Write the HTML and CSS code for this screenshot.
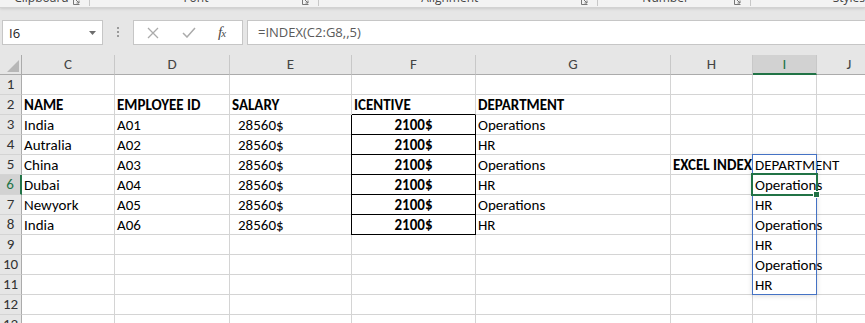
FILE: index.html
```html
<!DOCTYPE html>
<html>
<head>
<meta charset="utf-8">
<link rel="stylesheet" href="styles.css">
</head>
<body>
<div class="ribbon">
  <div class="grp g1"><span class="lbl">Clipboard</span><span class="launch"><svg width="7" height="7" viewBox="0 0 7 7"><path d="M0.5 0 V6.5 H6.5" fill="none" stroke="#777"/><path d="M2 1 L6 5 M3.5 5 H6 V2.5" fill="none" stroke="#777"/></svg></span></div>
  <div class="grp g2"><span class="lbl">Font</span><span class="launch"><svg width="7" height="7" viewBox="0 0 7 7"><path d="M0.5 0 V6.5 H6.5" fill="none" stroke="#777"/><path d="M2 1 L6 5 M3.5 5 H6 V2.5" fill="none" stroke="#777"/></svg></span></div>
  <div class="grp g3"><span class="lbl">Alignment</span><span class="launch"><svg width="7" height="7" viewBox="0 0 7 7"><path d="M0.5 0 V6.5 H6.5" fill="none" stroke="#777"/><path d="M2 1 L6 5 M3.5 5 H6 V2.5" fill="none" stroke="#777"/></svg></span></div>
  <div class="grp g4"><span class="lbl">Number</span><span class="launch"><svg width="7" height="7" viewBox="0 0 7 7"><path d="M0.5 0 V6.5 H6.5" fill="none" stroke="#777"/><path d="M2 1 L6 5 M3.5 5 H6 V2.5" fill="none" stroke="#777"/></svg></span></div>
  <div class="grp g5"><span class="lbl">Styles</span></div>
</div>
<div class="fbar">
  <div class="namebox"><span class="nbtext">I6</span><svg class="nbarrow" width="7" height="4" viewBox="0 0 7 4"><path d="M0 0 H7 L3.5 4 Z" fill="#6d6d6d"/></svg></div>
  <div class="dots"><span></span><span></span><span></span></div>
  <div class="btns">
    <svg class="bx" width="12" height="12" viewBox="0 0 12 12"><path d="M1 1 L11 11 M11 1 L1 11" stroke="#ababab" stroke-width="1.3" fill="none"/></svg>
    <svg class="bok" width="14" height="11" viewBox="0 0 14 11"><path d="M1 6 L5 10 L13 1" stroke="#ababab" stroke-width="1.5" fill="none"/></svg>
    <span class="fx"><i>f</i><i class="x">x</i></span>
  </div>
  <div class="formula">=INDEX(C2:G8,,5)</div>
</div>
<div class="sheet">
  <div class="grid">
    <div class="corner"><svg width="12" height="12" viewBox="0 0 12 12"><path d="M12 0 V12 H0 Z" fill="#b7b7b7"/></svg></div>
    <div class="ch">C</div><div class="ch">D</div><div class="ch">E</div><div class="ch">F</div><div class="ch">G</div><div class="ch">H</div><div class="ch sel">I</div><div class="ch">J</div>

    <div class="rh">1</div><div class="c"></div><div class="c"></div><div class="c"></div><div class="c"></div><div class="c"></div><div class="c"></div><div class="c"></div><div class="c"></div>

    <div class="rh">2</div><div class="c b">NAME</div><div class="c b">EMPLOYEE ID</div><div class="c b">SALARY</div><div class="c b ftop">ICENTIVE</div><div class="c b">DEPARTMENT</div><div class="c"></div><div class="c"></div><div class="c"></div>

    <div class="rh">3</div><div class="c">India</div><div class="c">A01</div><div class="c sal">28560$</div><div class="c inc">2100$</div><div class="c">Operations</div><div class="c"></div><div class="c"></div><div class="c"></div>

    <div class="rh">4</div><div class="c">Autralia</div><div class="c">A02</div><div class="c sal">28560$</div><div class="c inc">2100$</div><div class="c">HR</div><div class="c"></div><div class="c"></div><div class="c"></div>

    <div class="rh">5</div><div class="c">China</div><div class="c">A03</div><div class="c sal">28560$</div><div class="c inc">2100$</div><div class="c">Operations</div><div class="c b right">EXCEL INDEX</div><div class="c">DEPARTMENT</div><div class="c"></div>

    <div class="rh sel">6</div><div class="c">Dubai</div><div class="c">A04</div><div class="c sal">28560$</div><div class="c inc">2100$</div><div class="c">HR</div><div class="c"></div><div class="c">Operations</div><div class="c"></div>

    <div class="rh">7</div><div class="c">Newyork</div><div class="c">A05</div><div class="c sal">28560$</div><div class="c inc">2100$</div><div class="c">Operations</div><div class="c"></div><div class="c">HR</div><div class="c"></div>

    <div class="rh">8</div><div class="c">India</div><div class="c">A06</div><div class="c sal">28560$</div><div class="c inc">2100$</div><div class="c">HR</div><div class="c"></div><div class="c">Operations</div><div class="c"></div>

    <div class="rh">9</div><div class="c"></div><div class="c"></div><div class="c"></div><div class="c"></div><div class="c"></div><div class="c"></div><div class="c">HR</div><div class="c"></div>

    <div class="rh">10</div><div class="c"></div><div class="c"></div><div class="c"></div><div class="c"></div><div class="c"></div><div class="c"></div><div class="c">Operations</div><div class="c"></div>

    <div class="rh">11</div><div class="c"></div><div class="c"></div><div class="c"></div><div class="c"></div><div class="c"></div><div class="c"></div><div class="c">HR</div><div class="c"></div>

    <div class="rh">12</div><div class="c"></div><div class="c"></div><div class="c"></div><div class="c"></div><div class="c"></div><div class="c"></div><div class="c"></div><div class="c"></div>

    <div class="rh">13</div><div class="c"></div><div class="c"></div><div class="c link">What is VLOOKUP</div><div class="c"></div><div class="c"></div><div class="c"></div><div class="c"></div><div class="c"></div>
  </div>
  <div class="range"></div>
  <div class="active"></div>
  <div class="handle"></div>
</div>
</body>
</html>
```
FILE: styles.css
```css
html, body {
  margin: 0;
  padding: 0;
  width: 865px;
  height: 323px;
  overflow: hidden;
  background: #e6e6e6;
}

.ribbon {
  height: 7px;
  background: #f3f3f3;
  border-bottom: 1px solid #d2d2d2;
  box-shadow: 0 1px 3px rgba(0,0,0,0.12);
  display: flex;
  overflow: hidden;
  position: relative;
  z-index: 1;
}
.grp {
  display: flex;
  box-sizing: border-box;
  border-right: 1px solid #c8c8c8;
  height: 6px;
}
.g1 { width: 91px; }
.g2 { width: 232px; }
.g3 { width: 282px; }
.g4 { width: 155px; }
.g5 { flex: 1; border-right: none; padding-left: 82px; }
.lbl {
  flex: 1;
  text-align: center;
  font: 12px "Open Sans", "Noto Sans", sans-serif;
  color: #444;
  line-height: 12px;
  margin-top: -8px;
}
.g5 .lbl { flex: none; text-align: left; }
.g1 .lbl { padding-left: 0; margin-right: -10px; }
.launch {
  width: 16px;
  display: flex;
  justify-content: flex-start;
  align-items: flex-start;
}
.launch svg { margin-top: -2px; }

.fbar {
  height: 47px;
  display: flex;
  align-items: flex-start;
  padding-top: 12px;
  box-sizing: border-box;
}
.namebox {
  margin-left: 2px;
  width: 101px;
  height: 25px;
  box-sizing: border-box;
  background: #fff;
  border: 1px solid #c6c6c6;
  display: flex;
  align-items: center;
  justify-content: space-between;
  padding: 0 6px 0 6px;
}
.nbtext {
  font: 13px "Open Sans", "Noto Sans", sans-serif;
  color: #222;
}
.dots {
  width: 30px;
  display: flex;
  flex-direction: column;
  align-items: center;
  gap: 2px;
  padding-top: 7px;
}
.dots span {
  width: 2px;
  height: 2px;
  background: #9a9a9a;
}
.btns {
  width: 110px;
  height: 25px;
  box-sizing: border-box;
  background: #fff;
  border: 1px solid #c6c6c6;
  display: flex;
  align-items: center;
  padding-left: 13px;
}
.bok { margin-left: 23px; }
.fx {
  margin-left: 22px;
  font: italic 15px "Liberation Serif", serif;
  color: #4a4a4a;
  letter-spacing: -1px;
}
.fx .x { font-size: 11px; }
.formula {
  margin-left: 4px;
  flex: 1;
  height: 25px;
  box-sizing: border-box;
  background: #fff;
  border: 1px solid #c6c6c6;
  border-right: none;
  font: 13px "Open Sans", "Noto Sans", sans-serif;
  color: #5a5a5a;
  line-height: 23px;
  padding-left: 10px;
}

.sheet {
  position: relative;
  background: #fff;
  height: 268px;
  overflow: hidden;
}
.grid {
  display: grid;
  grid-template-columns: 22px 93px 115px 122px 124px 195px 82px 64px 65px;
  grid-auto-rows: 20px;
  font: 15px Calibri, Carlito, Lato, sans-serif;
  color: #000;
}
.corner {
  background: #e6e6e6;
  border-right: 1px solid #ababab;
  border-bottom: 1px solid #ababab;
  box-sizing: border-box;
  display: flex;
  align-items: flex-end;
  justify-content: flex-end;
  padding: 0 2px 2px 0;
}
.ch {
  background: #e6e6e6;
  border-right: 1px solid #c8c8c8;
  border-bottom: 1px solid #ababab;
  box-sizing: border-box;
  text-align: center;
  line-height: 18px;
  color: #444;
}
.ch.sel {
  background: #d2d2d2;
  border-bottom: 2px solid #217346;
  color: #217346;
}
.rh {
  background: #e6e6e6;
  border-right: 1px solid #ababab;
  border-bottom: 1px solid #d4d4d4;
  box-sizing: border-box;
  text-align: center;
  line-height: 19px;
  color: #333;
}
.rh.sel {
  background: #d2d2d2;
  border-right: 2px solid #217346;
  color: #217346;
}
.c {
  border-right: 1px solid #d4d4d4;
  border-bottom: 1px solid #d4d4d4;
  box-sizing: border-box;
  padding: 1px 2px 0;
  white-space: nowrap;
  line-height: 19px;
}
.b { font-weight: bold; }
.right { text-align: right; padding-right: 1px; }
.sal { padding-left: 8px; }
.inc {
  font-weight: bold;
  text-align: center;
  border-right-color: #000;
  border-bottom-color: #000;
  box-shadow: -1px 0 0 #000;
}
.ftop { border-bottom-color: #000; }
.link {
  color: #954f72;
  padding-top: 4px;
}

.range {
  position: absolute;
  left: 752px;
  top: 99px;
  width: 65px;
  height: 141px;
  box-sizing: border-box;
  border: 1px solid #4472c4;
  box-shadow: 0 1px 5px rgba(0,0,0,0.15);
}
.active {
  position: absolute;
  left: 751px;
  top: 118px;
  width: 67px;
  height: 23px;
  box-sizing: border-box;
  border: 2px solid #217346;
}
.handle {
  position: absolute;
  left: 813px;
  top: 136px;
  width: 7px;
  height: 7px;
  box-sizing: border-box;
  background: #217346;
  border: 1px solid #fff;
}
```
